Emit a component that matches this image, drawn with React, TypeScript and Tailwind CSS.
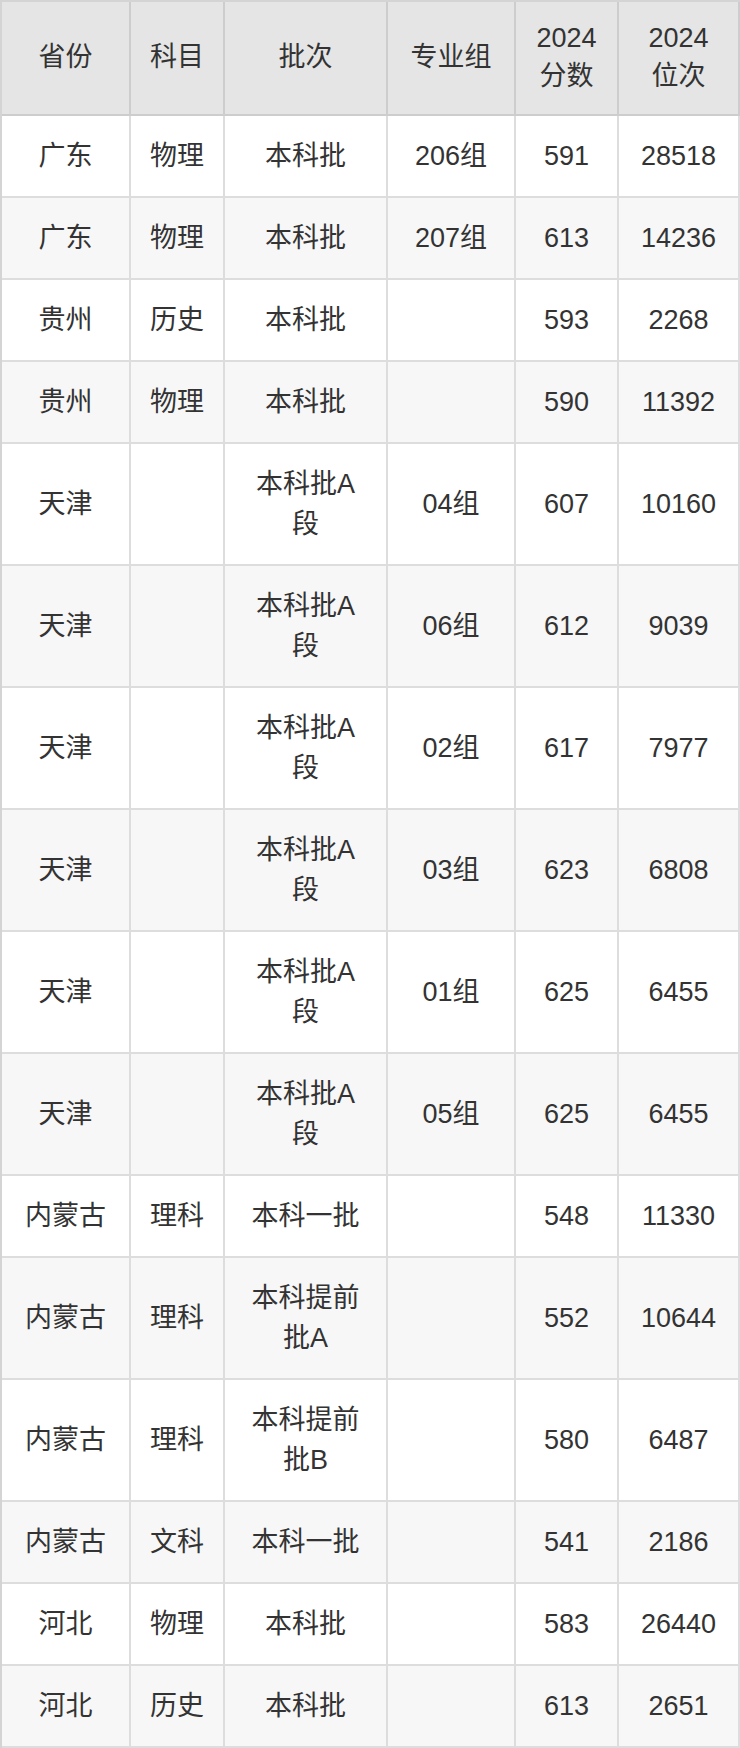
type Row = {
  province: string;
  subject: string;
  batch: string;
  group: string;
  score: string;
  rank: string;
};

const rows: Row[] = [
  { province: "广东", subject: "物理", batch: "本科批", group: "206组", score: "591", rank: "28518" },
  { province: "广东", subject: "物理", batch: "本科批", group: "207组", score: "613", rank: "14236" },
  { province: "贵州", subject: "历史", batch: "本科批", group: "", score: "593", rank: "2268" },
  { province: "贵州", subject: "物理", batch: "本科批", group: "", score: "590", rank: "11392" },
  { province: "天津", subject: "", batch: "本科批A段", group: "04组", score: "607", rank: "10160" },
  { province: "天津", subject: "", batch: "本科批A段", group: "06组", score: "612", rank: "9039" },
  { province: "天津", subject: "", batch: "本科批A段", group: "02组", score: "617", rank: "7977" },
  { province: "天津", subject: "", batch: "本科批A段", group: "03组", score: "623", rank: "6808" },
  { province: "天津", subject: "", batch: "本科批A段", group: "01组", score: "625", rank: "6455" },
  { province: "天津", subject: "", batch: "本科批A段", group: "05组", score: "625", rank: "6455" },
  { province: "内蒙古", subject: "理科", batch: "本科一批", group: "", score: "548", rank: "11330" },
  { province: "内蒙古", subject: "理科", batch: "本科提前批A", group: "", score: "552", rank: "10644" },
  { province: "内蒙古", subject: "理科", batch: "本科提前批B", group: "", score: "580", rank: "6487" },
  { province: "内蒙古", subject: "文科", batch: "本科一批", group: "", score: "541", rank: "2186" },
  { province: "河北", subject: "物理", batch: "本科批", group: "", score: "583", rank: "26440" },
  { province: "河北", subject: "历史", batch: "本科批", group: "", score: "613", rank: "2651" },
];

const th = "border-r-2 border-b-2 border-[#cdcdcd] px-[8px] pt-[17px] pb-[19px] align-middle font-normal leading-[38px]";
const td = "border-r-2 border-b-2 border-[#dddddd] px-[8px] py-[20px] align-middle leading-[40px]";

export default function App() {
  return (
    <div className="w-[740px] bg-white font-['Liberation_Sans','Noto_Sans_CJK_SC',sans-serif] text-[27px] text-[#333333]">
      <table className="w-[740px] table-fixed border-separate border-spacing-0 border-l-2 border-t-2 border-[#d4d4d4] text-center">
        <colgroup>
          <col className="w-[129px]" />
          <col className="w-[94px]" />
          <col className="w-[163px]" />
          <col className="w-[128px]" />
          <col className="w-[103px]" />
          <col className="w-[121px]" />
        </colgroup>
        <thead>
          <tr className="bg-[#e5e5e5]">
            <th className={th}>省份</th>
            <th className={th}>科目</th>
            <th className={th}>批次</th>
            <th className={th}>专业组</th>
            <th className={th}>
              2024
              <br />
              分数
            </th>
            <th className={th}>
              2024
              <br />
              位次
            </th>
          </tr>
        </thead>
        <tbody>
          {rows.map((r, i) => (
            <tr key={i} className={i % 2 === 1 ? "bg-[#f7f7f7]" : "bg-white"}>
              <td className={td}>{r.province}</td>
              <td className={td}>{r.subject}</td>
              <td className={`${td} px-[24px]`}>{r.batch}</td>
              <td className={td}>{r.group}</td>
              <td className={td}>{r.score}</td>
              <td className={td}>{r.rank}</td>
            </tr>
          ))}
        </tbody>
      </table>
    </div>
  );
}
